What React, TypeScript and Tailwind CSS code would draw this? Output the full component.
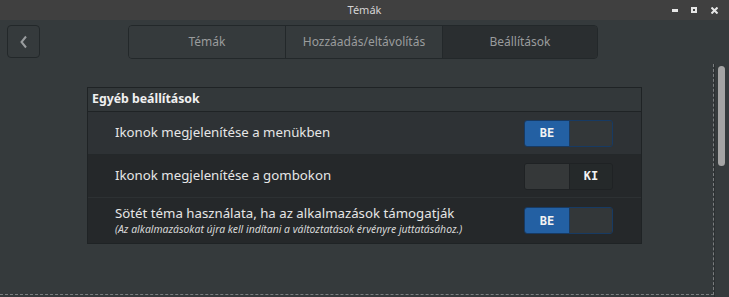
import React from "react";

const font = { fontFamily: '"Noto Sans", "Open Sans", sans-serif' };

function Toggle({ on }: { on: boolean }) {
  return on ? (
    <div className="flex w-[89px] h-[27px] rounded-[3px] border border-[#173a63] overflow-hidden">
      <div className="w-[44px] h-full bg-[#2360a3] flex items-center justify-center text-[12px] font-bold text-[#f2f2f2]" style={{ fontFamily: '"DejaVu Sans Mono", monospace' }}>BE</div>
      <div className="flex-1 h-full bg-[#333739] border-l border-[#1d3a5c]"></div>
    </div>
  ) : (
    <div className="flex w-[89px] h-[27px] rounded-[3px] border border-[#1f2224] overflow-hidden">
      <div className="w-[44px] h-full bg-[#353839]"></div>
      <div className="flex-1 h-full bg-[#25292a] border-l border-[#1f2224] flex items-center justify-center text-[12px] font-bold text-[#f2f2f2]" style={{ fontFamily: '"DejaVu Sans Mono", monospace' }}>KI</div>
    </div>
  );
}

export default function App() {
  return (
    <div className="w-[729px] h-[297px] bg-[#353a3c] flex flex-col overflow-hidden" style={font}>
      {/* title bar */}
      <div className="relative h-[20px] bg-[#404040] flex items-center justify-center shrink-0">
        <span className="text-[11px] text-[#d4d4d4]">Témák</span>
        <div className="absolute right-0 top-0 h-full flex items-center">
          <div className="w-[6px] h-[3px] bg-[#e6e6e6] mr-[13px] mt-[1px]"></div>
          <div className="w-[6px] h-[6px] border-2 border-[#e6e6e6] mr-[14px]"></div>
          <svg width="7" height="7" viewBox="0 0 7 7" className="mr-[11px]">
            <path d="M0.5 0.5 L6.5 6.5 M6.5 0.5 L0.5 6.5" stroke="#e6e6e6" strokeWidth="2" />
          </svg>
        </div>
      </div>
      {/* toolbar */}
      <div className="h-[44px] shrink-0 flex items-start pt-[5px]">
        <div className="ml-[7px] w-[33px] h-[33px] rounded-[4px] border border-[#23282a] bg-[#353a3c] flex items-center justify-center">
          <svg width="10" height="14" viewBox="0 0 10 14">
            <path d="M7 1.5 L2.5 7 L7 12.5" stroke="#9a9d9f" strokeWidth="2" fill="none" />
          </svg>
        </div>
        <div className="ml-[88px] w-[470px] h-[34px] rounded-[4px] border border-[#23282a] flex overflow-hidden text-[12px] text-[#9a9c9d]">
          <div className="w-[156px] flex items-center justify-center bg-[#353a3c]">Témák</div>
          <div className="w-[157px] flex items-center justify-center bg-[#353a3c] border-l border-[#23282a]">Hozzáadás/eltávolítás</div>
          <div className="flex-1 flex items-center justify-center bg-[#2a2e30] border-l border-[#23282a]">Beállítások</div>
        </div>
      </div>
      {/* content */}
      <div className="flex-1 flex">
        <div className="w-[714px] h-[231px] border-r border-b border-dashed border-[#7a7d7f] pt-[23px] pl-[87px]">
          <div className="w-[555px] border border-[#1f2325]">
            <div className="h-[24px] flex items-center pl-[4px] text-[12.3px] font-bold text-[#f0f0f0] bg-[#33383a] border-b border-[#1f2325]">Egyéb beállítások</div>
            <div className="h-[43px] flex items-center justify-between pl-[27px] pr-[28px] bg-[#2e3235] border-b border-[#24282a]">
              <span className="text-[13.25px] text-[#e6e6e6]">Ikonok megjelenítése a menükben</span>
              <Toggle on={true} />
            </div>
            <div className="h-[43px] flex items-center justify-between pl-[27px] pr-[28px] bg-[#25282a] border-b border-[#2d3133]">
              <span className="text-[13.25px] text-[#e6e6e6]">Ikonok megjelenítése a gombokon</span>
              <Toggle on={false} />
            </div>
            <div className="h-[45px] flex items-center justify-between pl-[27px] pr-[28px] bg-[#25282a]">
              <div className="flex flex-col">
                <span className="text-[13.25px] leading-[17px] text-[#e6e6e6]">Sötét téma használata, ha az alkalmazások támogatják</span>
                <span className="text-[10.4px] leading-[14px] italic text-[#d8d8d8]">(Az alkalmazásokat újra kell indítani a változtatások érvényre juttatásához.)</span>
              </div>
              <Toggle on={true} />
            </div>
          </div>
        </div>
        <div className="flex-1 border-l border-[#2b2f31] pt-[2px] pl-[3px]">
          <div className="w-[7px] h-[100px] rounded-full bg-[#a5a5a5]"></div>
        </div>
      </div>
    </div>
  );
}
